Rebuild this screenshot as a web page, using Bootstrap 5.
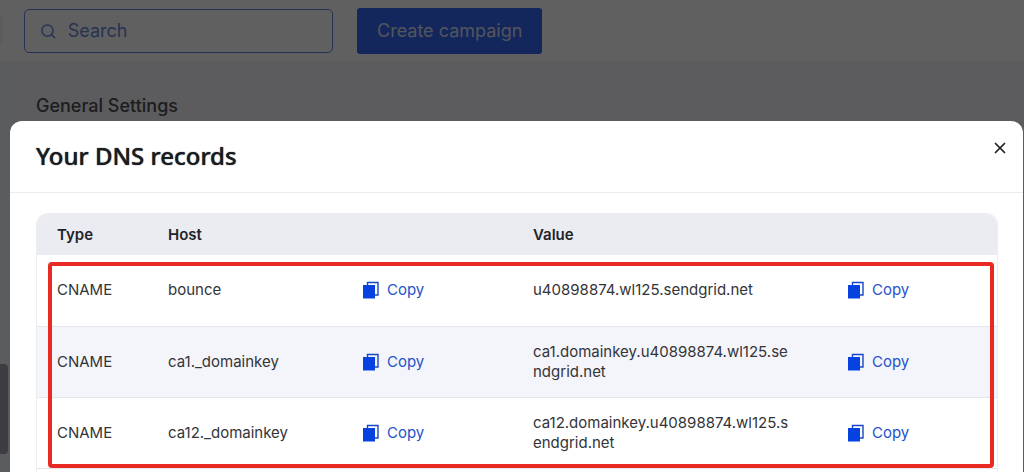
<!DOCTYPE html>
<html lang="en">
<head>
<meta charset="utf-8">
<meta name="viewport" content="width=device-width, initial-scale=1">
<title>Your DNS records</title>
<link href="https://cdn.jsdelivr.net/npm/bootstrap@5.3.0/dist/css/bootstrap.min.css" rel="stylesheet">
<style>
  body { font-family: Inter, "Liberation Sans", sans-serif; font-size: 15px; line-height: 20px; color: #333438; background: #f2f2f8; }
  .topbar { background: #fdfdfd; padding: 8px 24px; border-bottom: 1px solid #eeeef4; }
  .side-tab { left: 0; top: 16px; width: 3px; height: 28px; background: #eeeef4; border-radius: 0 4px 4px 0; }
  .search-box { width: 309px; height: 44px; border: 1px solid #6584da; border-radius: 5px; padding: 0 16px; gap: 12px; color: #6b85d8; }
  .search-box input, .search-box input::placeholder { color: #6b85d8; opacity: 1; font-size: 18px; }
  .search-box input { min-width: 0; outline: 0; }
  .create-btn { background: #3568f5; color: #d8dcf0; font-size: 18px; height: 46px; border-radius: 3px; padding: 0 20px; border: 0; }
  .rail { width: 10px; background: #edf2f4; }
  .page-title { font-size: 18px; line-height: 24px; font-weight: 500; padding: 31px 26px 0; color: #4c4d55; }
  .shade { background: rgba(0, 0, 0, .62); }
  .scroll-thumb { left: 0; top: 364px; width: 8px; height: 90px; background: #3d3c40; border-radius: 0 4px 4px 0; }
  .dialog-wrap { padding: 121px 1px 0 10px; }
  .dialog-panel { border-radius: 12px 12px 0 0; }
  .dialog-head { padding: 17px 16px 0 26px; height: 72px; border-bottom: 1px solid #ebebef; }
  .dialog-head h1 { font: 500 24px/32px "Noto Sans", "Open Sans", sans-serif; padding-top: 2px; color: #1b1c21; text-shadow: 0 0 1px #1b1c21; }
  .close-x { width: 14px; height: 20px; }
  .dialog-body { padding: 20px 25px 0 26px; }
  .dns-frame { border: 1px solid #edeef2; border-bottom: 0; border-radius: 12px 12px 0 0; }
  .dns-table { table-layout: fixed; }
  .dns-table th { background: #ebecf1; height: 41px; padding: 0 20px; font-weight: 600; color: #222328; }
  .dns-table th:first-child { border-top-left-radius: 11px; }
  .dns-table th:last-child { border-top-right-radius: 11px; }
  .dns-table td { height: 71px; padding: 0 20px; border-bottom: 1px solid #e4e6ec; }
  .dns-table tr:nth-child(even) td { background: #f4f5fa; }
  .dns-table td.value { padding-right: 33px; word-break: break-all; }
  .col-type { width: 111px; } .col-host { width: 195px; } .col-copy { width: 170px; } .col-value { width: 315px; }
  .copy-btn { gap: 7px; color: #2553cc; font-size: 15px; line-height: 20px; }
  .highlight { top: 48px; right: 3px; bottom: 1px; left: 11px; border: 4px solid #e92a22; border-radius: 4px; pointer-events: none; }
</style>
</head>
<body class="vh-100 overflow-hidden d-flex flex-column">
<header class="topbar d-flex align-items-center gap-4">
  <span class="side-tab position-absolute"></span>
  <label class="search-box d-flex align-items-center">
    <svg width="17" height="18" viewBox="0 0 17 18" fill="none" stroke="currentColor" stroke-width="1.7" stroke-linecap="round" aria-hidden="true"><circle cx="7.5" cy="8.500" r="6.5"/><path d="m12.3 13.3 3.4 3.4"/></svg>
    <input class="border-0 bg-transparent p-0 flex-grow-1" type="search" placeholder="Search" aria-label="Search">
  </label>
  <button class="create-btn" type="button">Create campaign</button>
</header>
<main class="d-flex flex-grow-1">
  <div class="rail"></div>
  <h2 class="page-title m-0">General Settings</h2>
</main>

<div class="shade position-fixed top-0 start-0 w-100 h-100 overflow-hidden">
  <span class="scroll-thumb position-absolute"></span>
  <div class="dialog-wrap d-flex flex-column h-100">
    <section class="dialog-panel bg-white flex-grow-1 d-flex flex-column" role="dialog" aria-labelledby="dns-title">
      <div class="dialog-head d-flex justify-content-between align-items-start">
        <h1 class="m-0" id="dns-title">Your DNS records</h1>
        <button class="close-x btn p-0 border-0 d-flex align-items-center justify-content-center" type="button" aria-label="Close">
          <svg width="12" height="12" viewBox="0 0 12 12" stroke="#1f2024" stroke-width="1.7"><path d="m1 1 10 10M11 1 1 11"/></svg>
        </button>
      </div>
      <div class="dialog-body flex-grow-1 d-flex flex-column">
        <div class="dns-frame flex-grow-1">
          <div class="position-relative">
            <table class="dns-table w-100 align-middle">
              <colgroup><col class="col-type"><col class="col-host"><col class="col-copy"><col class="col-value"><col></colgroup>
              <thead><tr><th>Type</th><th>Host</th><th></th><th>Value</th><th></th></tr></thead>
              <tbody>
                <tr>
                  <td>CNAME</td><td>bounce</td>
                  <td><button class="copy-btn btn p-0 border-0 d-flex align-items-center" type="button"><svg width="17" height="18" viewBox="0 0 17 18" aria-hidden="true"><path d="M4.500 4V1.500h10.500V14H12" fill="none" stroke="#1746c8" stroke-width="1.4"/><path d="M0 4h12v13.500H0z" fill="#0542e0"/></svg>Copy</button></td>
                  <td class="value">u40898874.wl125.sendgrid.net</td>
                  <td><button class="copy-btn btn p-0 border-0 d-flex align-items-center" type="button"><svg width="17" height="18" viewBox="0 0 17 18" aria-hidden="true"><path d="M4.500 4V1.500h10.500V14H12" fill="none" stroke="#1746c8" stroke-width="1.4"/><path d="M0 4h12v13.500H0z" fill="#0542e0"/></svg>Copy</button></td>
                </tr>
                <tr>
                  <td>CNAME</td><td>ca1._domainkey</td>
                  <td><button class="copy-btn btn p-0 border-0 d-flex align-items-center" type="button"><svg width="17" height="18" viewBox="0 0 17 18" aria-hidden="true"><path d="M4.500 4V1.500h10.500V14H12" fill="none" stroke="#1746c8" stroke-width="1.4"/><path d="M0 4h12v13.500H0z" fill="#0542e0"/></svg>Copy</button></td>
                  <td class="value">ca1.domainkey.u40898874.wl125.sendgrid.net</td>
                  <td><button class="copy-btn btn p-0 border-0 d-flex align-items-center" type="button"><svg width="17" height="18" viewBox="0 0 17 18" aria-hidden="true"><path d="M4.500 4V1.500h10.500V14H12" fill="none" stroke="#1746c8" stroke-width="1.4"/><path d="M0 4h12v13.500H0z" fill="#0542e0"/></svg>Copy</button></td>
                </tr>
                <tr>
                  <td>CNAME</td><td>ca12._domainkey</td>
                  <td><button class="copy-btn btn p-0 border-0 d-flex align-items-center" type="button"><svg width="17" height="18" viewBox="0 0 17 18" aria-hidden="true"><path d="M4.500 4V1.500h10.500V14H12" fill="none" stroke="#1746c8" stroke-width="1.4"/><path d="M0 4h12v13.500H0z" fill="#0542e0"/></svg>Copy</button></td>
                  <td class="value">ca12.domainkey.u40898874.wl125.sendgrid.net</td>
                  <td><button class="copy-btn btn p-0 border-0 d-flex align-items-center" type="button"><svg width="17" height="18" viewBox="0 0 17 18" aria-hidden="true"><path d="M4.500 4V1.500h10.500V14H12" fill="none" stroke="#1746c8" stroke-width="1.4"/><path d="M0 4h12v13.500H0z" fill="#0542e0"/></svg>Copy</button></td>
                </tr>
              </tbody>
            </table>
            <div class="highlight position-absolute"></div>
          </div>
        </div>
      </div>
    </section>
  </div>
</div>
<script src="https://cdn.jsdelivr.net/npm/bootstrap@5.3.0/dist/js/bootstrap.bundle.min.js"></script>
</body>
</html>
